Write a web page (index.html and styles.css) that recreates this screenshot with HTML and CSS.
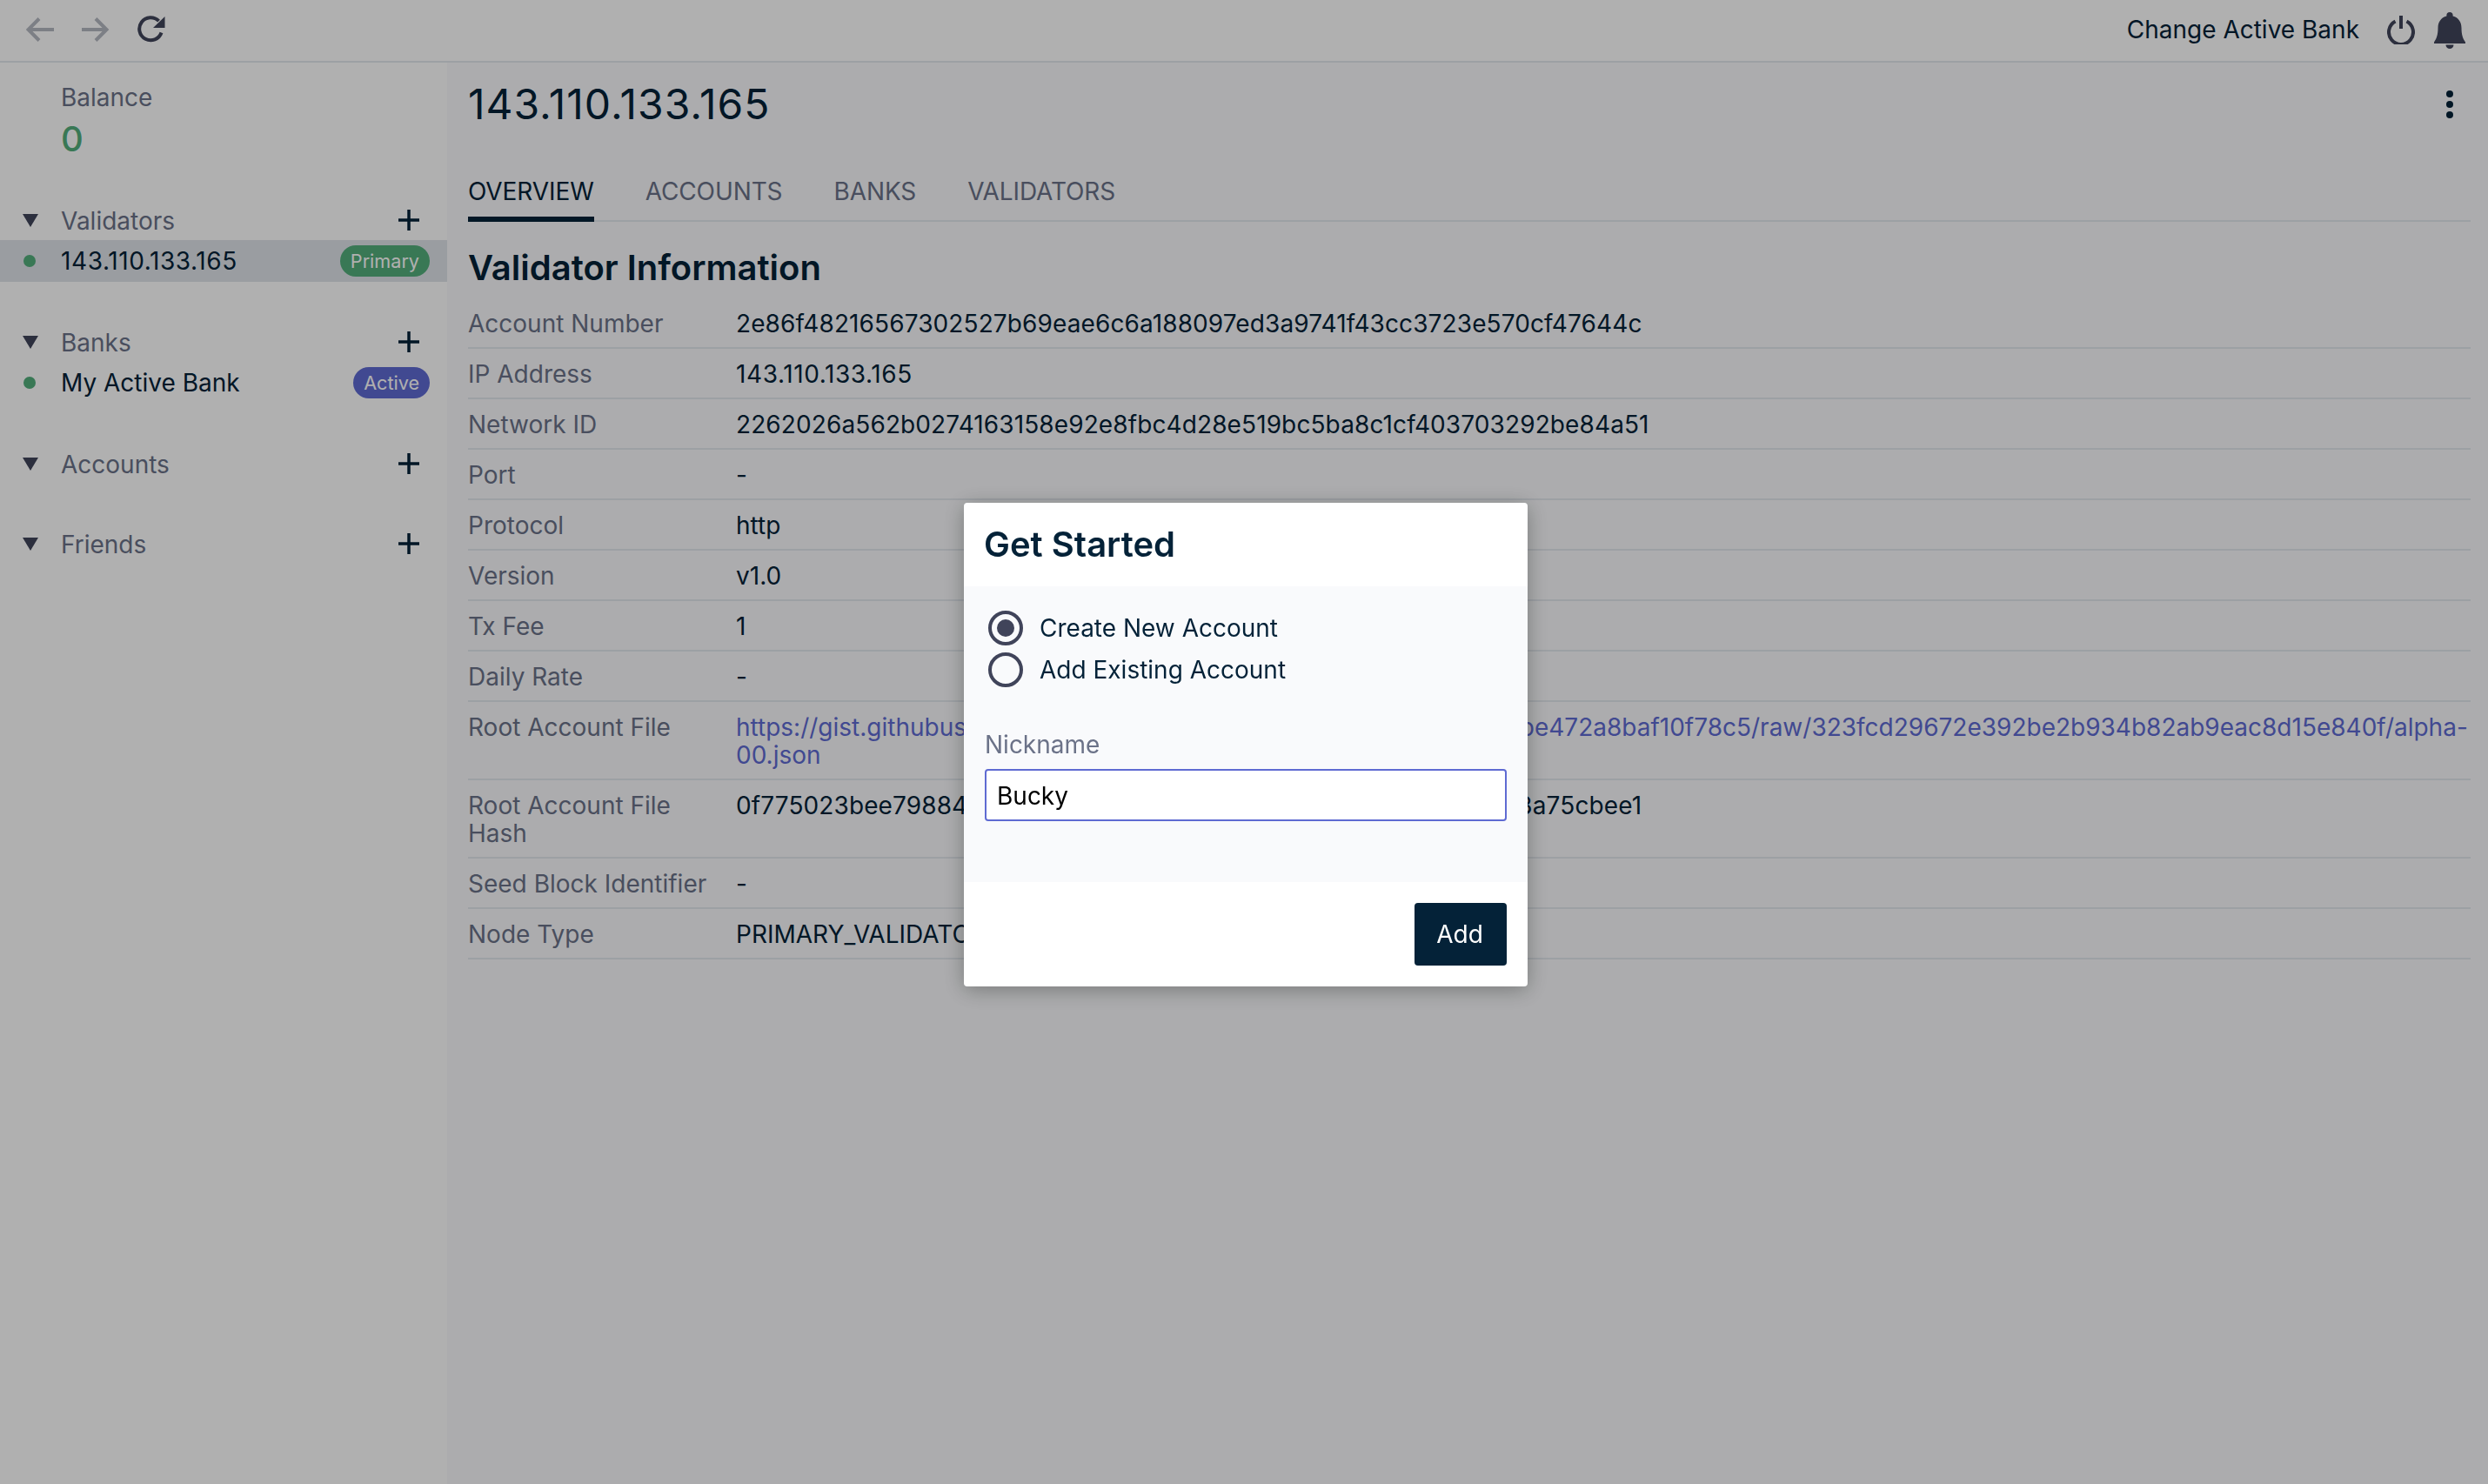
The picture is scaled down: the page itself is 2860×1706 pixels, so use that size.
FILE: index.html
```html
<!DOCTYPE html>
<html lang="en">

<head>
    <meta charset="UTF-8">
    <title>Thenewboston Wallet</title>
    <link rel="stylesheet" href="styles.css">
</head>

<body>

    <header class="top-bar">
        <div class="top-nav">
            <svg class="icon nav-disabled" viewBox="0 0 32 32"><path d="M32 16H3M15 3.500 2.500 16 15 28.500" /></svg>
            <svg class="icon nav-disabled" viewBox="0 0 32 32"><path d="M0 16h28M16 3.500 28.500 16 16 28.500" /></svg>
            <svg class="icon nav-reload" viewBox="0 0 32 32">
                <path d="M27.500 19.500A13 13 0 1 1 24.500 6.200" />
                <polygon class="solid" points="31.500,1 31.500,14 18,14" />
            </svg>
        </div>
        <div class="top-actions">
            <span class="change-bank">Change Active Bank</span>
            <svg class="icon icon-power" viewBox="0 0 32 34"><path d="M9.500 7.500a14 14 0 1 0 13 0M16 1v15" /></svg>
            <svg class="icon-bell" viewBox="0 0 36 42">
                <path d="M18 0a3.600 3.600 0 0 1 3.600 3.600v.9C28 6 31.500 11.500 31.500 18c0 8 1.500 12 4.500 16.500v1.500H0v-1.500C3 30 4.500 26 4.500 18 4.500 11.500 8 6 14.400 4.500v-.9A3.600 3.600 0 0 1 18 0Z" />
                <path d="M13.500 37.500h9a4.500 4.500 0 0 1-9 0Z" />
            </svg>
        </div>
    </header>

    <div class="layout">
        <aside class="sidebar">
            <div class="balance">
                <div class="balance-label">Balance</div>
                <div class="balance-value">0</div>
            </div>

            <section class="side-section">
                <div class="side-head">
                    <span class="caret"></span>
                    <span class="side-title">Validators</span>
                    <svg class="plus" viewBox="0 0 24 24"><path d="M12 0v24M0 12h24" /></svg>
                </div>
                <div class="side-item selected">
                    <span class="dot"></span>
                    <span class="side-name ip-text">143.110.133.165</span>
                    <span class="badge badge-primary">Primary</span>
                </div>
            </section>

            <section class="side-section">
                <div class="side-head">
                    <span class="caret"></span>
                    <span class="side-title">Banks</span>
                    <svg class="plus" viewBox="0 0 24 24"><path d="M12 0v24M0 12h24" /></svg>
                </div>
                <div class="side-item">
                    <span class="dot"></span>
                    <span class="side-name">My Active Bank</span>
                    <span class="badge badge-active">Active</span>
                </div>
            </section>

            <section class="side-section">
                <div class="side-head">
                    <span class="caret"></span>
                    <span class="side-title">Accounts</span>
                    <svg class="plus" viewBox="0 0 24 24"><path d="M12 0v24M0 12h24" /></svg>
                </div>
            </section>

            <section class="side-section">
                <div class="side-head">
                    <span class="caret"></span>
                    <span class="side-title">Friends</span>
                    <svg class="plus" viewBox="0 0 24 24"><path d="M12 0v24M0 12h24" /></svg>
                </div>
            </section>
        </aside>

        <main class="content">
            <div class="page-head">
                <h1>143.110.133.165</h1>
                <div class="kebab"><span></span><span></span><span></span></div>
            </div>

            <nav class="tabs">
                <a class="tab active">OVERVIEW</a>
                <a class="tab">ACCOUNTS</a>
                <a class="tab">BANKS</a>
                <a class="tab">VALIDATORS</a>
            </nav>

            <h2>Validator Information</h2>

            <div class="info-table">
                <div class="info-row"><div class="info-key">Account Number</div><div class="info-val hash-text">2e86f48216567302527b69eae6c6a188097ed3a9741f43cc3723e570cf47644c</div></div>
                <div class="info-row"><div class="info-key">IP Address</div><div class="info-val ip-text">143.110.133.165</div></div>
                <div class="info-row"><div class="info-key">Network ID</div><div class="info-val hash-text">2262026a562b0274163158e92e8fbc4d28e519bc5ba8c1cf403703292be84a51</div></div>
                <div class="info-row"><div class="info-key">Port</div><div class="info-val">-</div></div>
                <div class="info-row"><div class="info-key">Protocol</div><div class="info-val">http</div></div>
                <div class="info-row"><div class="info-key">Version</div><div class="info-val">v1.0</div></div>
                <div class="info-row"><div class="info-key">Tx Fee</div><div class="info-val">1</div></div>
                <div class="info-row"><div class="info-key">Daily Rate</div><div class="info-val">-</div></div>
                <div class="info-row"><div class="info-key">Root Account File</div><div class="info-val"><a class="info-link">https://gist.githubusercontent.com/buckyroberts/519b5cb82a0a5b5be472a8baf10f78c5/raw/323fcd29672e392be2b934b82ab9eac8d15e840f/alpha-00.json</a></div></div>
                <div class="info-row"><div class="info-key">Root Account File Hash</div><div class="info-val hash-text">0f775023bee79884fbd9a90a76c5eacfee38a8ca52735f7ab59dab63a75cbee1</div></div>
                <div class="info-row"><div class="info-key">Seed Block Identifier</div><div class="info-val">-</div></div>
                <div class="info-row"><div class="info-key">Node Type</div><div class="info-val">PRIMARY_VALIDATOR</div></div>
            </div>
        </main>
    </div>

    <div class="overlay">
        <div class="modal">
            <div class="modal-head">Get Started</div>
            <div class="modal-body">
                <label class="radio-row"><span class="radio checked"></span>Create New Account</label>
                <label class="radio-row"><span class="radio"></span>Add Existing Account</label>
                <div class="field-label">Nickname</div>
                <div class="field-input">Bucky</div>
            </div>
            <div class="modal-foot">
                <button class="btn-add">Add</button>
            </div>
        </div>
    </div>

</body>

</html>
```

FILE: styles.css
```css
* {
    box-sizing: border-box;
}

body {
    font-family: Inter, "Noto Sans", sans-serif;
    font-size: 28px;
    line-height: 32px;
    margin: 0;
    height: 1706px;
    overflow: hidden;
    background-color: #fff;
    color: #042238;
}

/* digits run a little wider in the original */
.ip-text {
    letter-spacing: 0.6px;
}

.hash-text {
    letter-spacing: 0.11px;
}

/* top bar */

.top-bar {
    height: 72px;
    border-bottom: 2px solid #e3e8ee;
    display: flex;
    justify-content: space-between;
    align-items: center;
    padding: 0 26px 0 30px;
}

.top-nav,
.top-actions {
    display: flex;
    align-items: center;
}

.top-nav {
    margin-top: -2px;
}

.icon {
    fill: none;
    stroke-width: 4;
}

.top-nav .icon {
    width: 32px;
    height: 32px;
    margin-right: 32px;
}

.nav-disabled {
    stroke: #b4b8c1;
}

.nav-reload {
    stroke: #40445a;
}

.nav-reload .solid {
    fill: #40445a;
    stroke: none;
}

.change-bank {
    margin-right: 32px;
    padding-bottom: 2px;
}

.icon-power {
    width: 32px;
    height: 34px;
    stroke: #40445a;
    margin-right: 22px;
    margin-top: -3px;
}

.icon-bell {
    width: 36px;
    height: 42px;
    fill: #40445a;
}

/* sidebar */

.layout {
    display: flex;
    height: 1634px;
}

.sidebar {
    width: 514px;
    flex-shrink: 0;
    background-color: #fff;
}

.balance {
    padding: 24px 0 0 70px;
    height: 158px;
}

.balance-label {
    color: #6b7288;
    height: 36px;
}

.balance-value {
    color: #53ae7c;
    font-size: 40px;
    font-weight: 500;
    line-height: 48px;
    margin-top: 4px;
}

.side-section {
    margin-bottom: 46px;
}

.side-head {
    height: 46px;
    display: flex;
    align-items: center;
    padding: 0 32px 0 26px;
}

.caret {
    width: 0;
    height: 0;
    border-left: 9px solid transparent;
    border-right: 9px solid transparent;
    border-top: 15px solid #40445a;
    margin-right: 26px;
}

.side-title {
    color: #6b7288;
    flex: 1;
    padding-top: 2px;
}

.plus {
    width: 24px;
    height: 24px;
    fill: none;
    stroke: #042238;
    stroke-width: 3.5;
}

.side-item {
    height: 48px;
    display: flex;
    align-items: center;
    padding: 0 20px 0 27px;
}

.side-item.selected {
    background-color: #dfe4e9;
}

.dot {
    width: 14px;
    height: 14px;
    border-radius: 50%;
    background-color: #53ae7c;
    margin-right: 29px;
}

.side-name {
    flex: 1;
}

.badge {
    height: 36px;
    border-radius: 18px;
    color: #fff;
    font-size: 21.6px;
    line-height: 36px;
    padding: 0 12px;
}

.badge-primary {
    background-color: #53ae7c;
}

.badge-active {
    background-color: #5f6bd2;
}

/* main content */

.content {
    flex: 1;
    background-color: #f9fafc;
    padding: 0 20px 0 24px;
}

.page-head {
    height: 76px;
    display: flex;
    justify-content: space-between;
    align-items: center;
    margin-top: 10px;
}

h1 {
    font-size: 48px;
    font-weight: 400;
    line-height: 56px;
    letter-spacing: 1px;
    margin: 0;
}

.kebab {
    display: flex;
    flex-direction: column;
    gap: 4px;
    margin-right: 20px;
}

.kebab span {
    display: block;
    width: 8px;
    height: 8px;
    border-radius: 50%;
    background-color: #042238;
}

.tabs {
    display: flex;
    gap: 59px;
    border-bottom: 2px solid #e3e8ee;
    height: 97px;
    align-items: flex-end;
}

.tab {
    color: #6b7288;
    height: 51px;
    margin-bottom: -2px;
    letter-spacing: -0.1px;
}

.tab.active {
    color: #042238;
    border-bottom: 6px solid #042238;
    border-radius: 4px 4px 0 0;
}

h2 {
    font-size: 40px;
    font-weight: 600;
    line-height: 48px;
    margin: 29px 0 11px;
}

/* info rows */

.info-row {
    display: grid;
    grid-template-columns: 308px 1fr;
    padding: 13px 0 11px;
    border-bottom: 2px solid #e3e8ee;
}

.info-key {
    color: #6b7288;
    padding-right: 20px;
}

.info-val {
    overflow-wrap: break-word;
}

.info-link {
    color: #5f6bd2;
}

/* modal */

.overlay {
    position: fixed;
    top: 0;
    left: 0;
    width: 100%;
    height: 100%;
    background-color: rgba(0, 0, 0, 0.31);
    display: flex;
    align-items: center;
    justify-content: center;
    padding: 6px 0 0 4px;
}

.modal {
    width: 648px;
    height: 556px;
    background-color: #fff;
    border-radius: 4px;
    box-shadow: 0 4px 24px rgba(0, 0, 0, 0.3);
    display: flex;
    flex-direction: column;
}

.modal-head {
    height: 96px;
    padding: 0 23px;
    display: flex;
    align-items: center;
    font-size: 40px;
    font-weight: 600;
}

.modal-body {
    height: 340px;
    background-color: #f9fafc;
    padding: 24px;
}

.radio-row {
    display: flex;
    align-items: center;
    height: 48px;
}

.radio {
    width: 40px;
    height: 40px;
    border: 4px solid #40445a;
    border-radius: 50%;
    margin-left: 4px;
    margin-right: 19px;
    display: flex;
    align-items: center;
    justify-content: center;
}

.radio.checked::after {
    content: "";
    width: 20px;
    height: 20px;
    border-radius: 50%;
    background-color: #40445a;
}

.field-label {
    color: #6b7288;
    margin-top: 46px;
    margin-bottom: 12px;
}

.field-input {
    height: 60px;
    border: 2px solid #5f6bd2;
    border-radius: 4px;
    background-color: #fff;
    color: #000;
    padding: 2px 12px 0;
    display: flex;
    align-items: center;
}

.modal-foot {
    flex: 1;
    display: flex;
    justify-content: flex-end;
    align-items: center;
    padding: 0 24px;
}

.btn-add {
    width: 106px;
    height: 72px;
    border: none;
    border-radius: 4px;
    background-color: #042238;
    color: #fff;
    font-family: inherit;
    font-size: 28px;
    padding: 0 2px 0 0;
}
```
